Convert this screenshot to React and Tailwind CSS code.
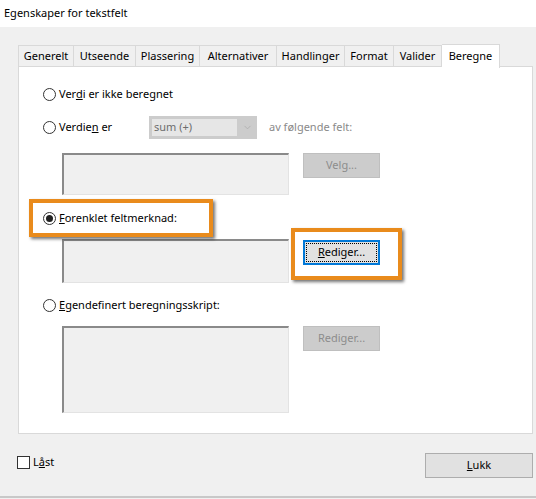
import { ChevronDown } from 'lucide-react'

const tabs = [
  { label: 'Generelt', w: 'w-[56px]' },
  { label: 'Utseende', w: 'w-[62px]' },
  { label: 'Plassering', w: 'w-[64px]' },
  { label: 'Alternativer', w: 'w-[77px]' },
  { label: 'Handlinger', w: 'w-[68px]' },
  { label: 'Format', w: 'w-[49px]' },
  { label: 'Valider', w: 'w-[48px]' },
]

function Radio({ checked }) {
  return (
    <span className="w-[13px] h-[13px] rounded-full border border-[#333] bg-white flex items-center justify-center shrink-0">
      {checked && <span className="w-[7px] h-[7px] rounded-full bg-[#222]" />}
    </span>
  )
}

function Field({ h }) {
  return (
    <div className={`w-[227px] ${h} bg-[#f0f0f0] border-t-2 border-l-2 border-t-[#8a8a8a] border-l-[#8a8a8a] border-b border-r border-b-[#e3e3e3] border-r-[#e3e3e3]`} />
  )
}

function DisabledButton({ children }) {
  return (
    <div className="w-[77px] h-[25px] bg-[#cccccc] border border-[#bfbfbf] text-[#8c8c8c] flex items-center justify-center">
      {children}
    </div>
  )
}

export default function App() {
  return (
    <div className="w-[536px] h-[499px] bg-[#f0f0f0] flex flex-col text-[11px] text-black overflow-hidden" style={{ fontFamily: '"Noto Sans", "Open Sans", sans-serif' }}>
      <div className="h-[27px] bg-white flex items-center px-[4px] shrink-0">Egenskaper for tekstfelt</div>

      {/* tab strip */}
      <div className="flex items-end ml-[18px] mt-[16px] h-[24px] relative z-10">
        {tabs.map(t => (
          <div key={t.label} className={`${t.w} h-[22px] border border-[#d9d9d9] border-l-0 first:border-l bg-[#f0f0f0] flex items-center justify-center`}>
            {t.label}
          </div>
        ))}
        <div className="w-[58px] h-[24px] bg-white border border-[#d9d9d9] border-b-0 border-l-0 flex items-start justify-center pt-[3px] -mb-px">
          Beregne
        </div>
      </div>

      <div className="ml-[18px] mr-[3px] h-[368px] -mt-px bg-white border border-[#d9d9d9] flex flex-col pl-[24px]">
        <div className="flex items-center gap-[3px] h-[20px] mt-[17px]">
          <Radio />
          <span>Ver<span className="underline">d</span>i er ikke beregnet</span>
        </div>

        <div className="flex items-center h-[23px] mt-[12px]">
          <div className="flex items-center gap-[3px] w-[106px]">
            <Radio />
            <span>Verdie<span className="underline">n</span> er</span>
          </div>
          <div className="w-[108px] h-[23px] bg-[#cccccc] flex items-center p-[3px] pr-0">
            <div className="w-[85px] h-full bg-[#e6e6e6] flex items-center px-[2px] text-[#6d6d6d]">sum (+)</div>
            <div className="flex-1 flex items-center justify-center text-[#a8a8a8]">
              <ChevronDown size={11} strokeWidth={1.5} />
            </div>
          </div>
          <span className="ml-[12px] text-[#8a8a8a]">av følgende felt:</span>
        </div>

        <div className="flex items-start gap-[14px] ml-[19px] mt-[14px]">
          <Field h="h-[42px]" />
          <DisabledButton>Velg...</DisabledButton>
        </div>

        <div className="relative flex items-center gap-[3px] h-[20px] mt-[13px]">
          <span className="absolute -left-[14px] w-[184px] -top-[9px] -bottom-[9px] border-[4px] border-[#e98b1c] shadow-[2px_2px_3px_rgba(0,0,0,0.55)]" />
          <Radio checked />
          <span className="relative"><span className="underline">F</span>orenklet feltmerknad:</span>
        </div>

        <div className="flex items-start gap-[14px] ml-[19px] mt-[11px]">
          <Field h="h-[44px]" />
          <div className="relative mt-[1px]">
            <span className="absolute -left-[12px] -right-[22px] -top-[12px] -bottom-[15px] border-[4px] border-[#e98b1c] shadow-[2px_2px_3px_rgba(0,0,0,0.55)]" />
            <div className="relative w-[77px] h-[25px] bg-[#e1e1e1] border-2 border-[#0078d7] p-[1px]">
              <div className="w-full h-full border border-dotted border-black flex items-center justify-center">
                <span><span className="underline">R</span>ediger...</span>
              </div>
            </div>
          </div>
        </div>

        <div className="flex items-center gap-[3px] h-[20px] mt-[12px]">
          <Radio />
          <span><span className="underline">E</span>gendefinert beregningsskript:</span>
        </div>

        <div className="flex items-start gap-[14px] ml-[19px] mt-[11px]">
          <Field h="h-[87px]" />
          <DisabledButton>Rediger...</DisabledButton>
        </div>
      </div>

      <div className="flex items-start justify-between mt-[19px] pl-[17px] pr-[3px]">
        <div className="flex items-center gap-[3px] mt-[1px]">
          <span className="w-[13px] h-[13px] border border-[#333] bg-white" />
          <span>L<span className="underline">å</span>st</span>
        </div>
        <div className="w-[108px] h-[25px] bg-[#e1e1e1] border border-[#adadad] flex items-center justify-center">
          <span><span className="underline">L</span>ukk</span>
        </div>
      </div>

      <div className="flex-1" />
      <div className="h-[2px] bg-[#c8c8c8] mb-[1px]" />
    </div>
  )
}
